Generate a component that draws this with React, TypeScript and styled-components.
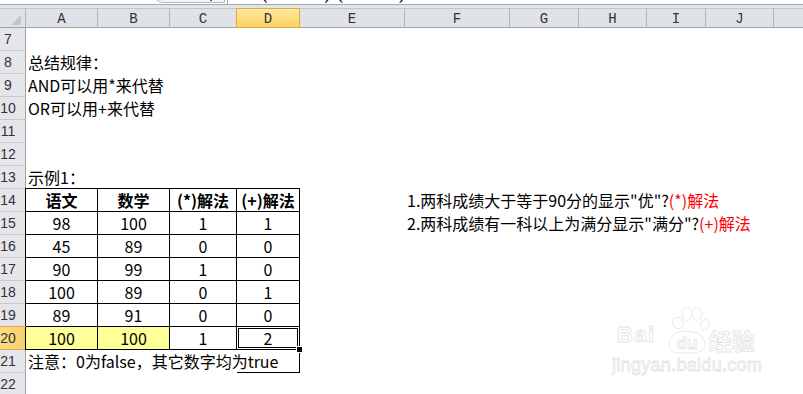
import React from 'react'
import styled, { createGlobalStyle } from 'styled-components'

const GlobalStyle = createGlobalStyle`
  html, body {
    margin: 0;
    padding: 0;
    background: #fff;
  }
  body {
    width: 803px;
    height: 394px;
    overflow: hidden;
  }
`

const COLS = ['A', 'B', 'C', 'D', 'E', 'F', 'G', 'H', 'I', 'J', 'K']
const WIDTHS = [26, 72, 72, 67, 63, 105, 105, 69, 68, 59, 68, 100]
const ROW_FROM = 7
const ROW_TO = 22
const ACTIVE_COL = 'D'
const ACTIVE_ROW = 20
// last column runs past the window edge, its letter is not in view
const VISIBLE_COLS = 10

const Page = styled.div`
  position: relative;
  width: 803px;
  height: 394px;
  overflow: hidden;
  background: #fff;
  font-family: 'Noto Sans CJK SC', 'Microsoft YaHei', sans-serif;
  color: #000;
`

// formula bar, scrolled off so only its lower edge shows
const FormulaBar = styled.div`
  display: flex;
  height: 4px;
  overflow: hidden;
  background: #fff;
  border-bottom: 1px solid #a5a9ae;
`

const NameBox = styled.div`
  flex: none;
  width: 153px;
  margin-top: -12px;
  text-align: center;
  font: 700 14px/16px 'Liberation Serif', serif;
  color: #222;
`

const Grip = styled.div`
  flex: none;
  width: 72px;
  height: 12px;
  margin-top: -9px;
  box-sizing: border-box;
  border: 1px solid #b5b9be;
  border-radius: 0 0 0 10px;
  background: #f4f5f7;
  position: relative;
  &::after {
    content: '';
    position: absolute;
    right: 12px;
    bottom: 1px;
    width: 2px;
    height: 2px;
    background: #555;
  }
`

const FormulaText = styled.div`
  flex: 1;
  margin-left: 2px;
  padding-left: 26px;
  border-left: 1px solid #a0a4a8;
  margin-top: -13px;
  font: 700 15px/16px 'Liberation Serif', serif;
  white-space: nowrap;
  color: #222;
`

const Band = styled.div`
  height: 3px;
  background: #e1e4e9;
`

const Sheet = styled.div`
  display: grid;
  grid-template-columns: ${WIDTHS.map((w) => `${w}px`).join(' ')};
  grid-template-rows: 20px repeat(${ROW_TO - ROW_FROM + 1}, 23px);
`

const Corner = styled.div`
  box-sizing: border-box;
  display: flex;
  align-items: flex-end;
  justify-content: flex-end;
  padding: 0 4px 2px 0;
  background: #dfe2e7;
  border-top: 1px solid #c2c6cb;
  border-bottom: 1px solid #9fa3a8;
  border-right: 1px solid #b1b5ba;
`

const ColHead = styled.div<{ $active?: boolean }>`
  box-sizing: border-box;
  min-width: 0;
  display: flex;
  align-items: center;
  justify-content: center;
  padding-top: 2px;
  font: 14px 'Liberation Mono', monospace;
  color: #333;
  background: ${({ $active }) => ($active ? 'linear-gradient(#fee8a3, #fcd35f)' : '#dfe2e7')};
  border-top: 1px solid ${({ $active }) => ($active ? '#e2a93f' : '#c2c6cb')};
  border-bottom: 1px solid ${({ $active }) => ($active ? '#e2a93f' : '#9fa3a8')};
  border-right: 1px solid ${({ $active }) => ($active ? '#e2a93f' : '#b1b5ba')};
  box-shadow: ${({ $active }) => ($active ? '-1px 0 0 #e2a93f' : 'none')};
`

const RowHead = styled.div<{ $active?: boolean }>`
  box-sizing: border-box;
  display: flex;
  align-items: center;
  justify-content: center;
  padding-right: 9px;
  font: 14px 'Liberation Sans', sans-serif;
  color: #333;
  background: ${({ $active }) => ($active ? 'linear-gradient(90deg, #fbdc86, #f8d06a)' : '#e4e6ea')};
  border-right: 1px solid ${({ $active }) => ($active ? '#e2a93f' : '#9ea2a7')};
  border-bottom: 1px solid ${({ $active }) => ($active ? '#e2a93f' : '#c6cace')};
  box-shadow: ${({ $active }) => ($active ? '0 -1px 0 #e2a93f' : 'none')};
`

type Edges = { r?: boolean; b?: boolean; t?: boolean; l?: boolean }

const shadows = ({ t, l }: Edges) => {
  const list: string[] = []
  if (t) list.push('0 -1px 0 #000')
  if (l) list.push('-1px 0 0 #000')
  if (t && l) list.push('-1px -1px 0 #000')
  return list.length ? list.join(', ') : 'none'
}

const Cell = styled.div<{
  $center?: boolean
  $bold?: boolean
  $fill?: string
  $r?: boolean
  $b?: boolean
  $t?: boolean
  $l?: boolean
  $selected?: boolean
}>`
  box-sizing: border-box;
  min-width: 0;
  display: flex;
  align-items: center;
  justify-content: ${({ $center }) => ($center ? 'center' : 'flex-start')};
  padding: 0 2px;
  white-space: nowrap;
  font-size: 16px;
  font-weight: ${({ $bold }) => ($bold ? 700 : 400)};
  background: ${({ $fill }) => $fill ?? 'transparent'};
  border-right: 1px solid ${({ $r }) => ($r ? '#000' : 'transparent')};
  border-bottom: 1px solid ${({ $b }) => ($b ? '#000' : 'transparent')};
  box-shadow: ${({ $t, $l }) => shadows({ t: $t, l: $l })};
  position: ${({ $selected }) => ($selected ? 'relative' : 'static')};
`

const Selection = styled.div`
  position: absolute;
  inset: -1px;
  z-index: 2;
  border: 1px solid #000;
  box-shadow: inset 0 0 0 1px #fff, inset 0 0 0 2px #000;
  pointer-events: none;
`

const FillHandle = styled.div`
  position: absolute;
  right: -4px;
  bottom: -4px;
  width: 5px;
  height: 5px;
  background: #000;
  border: 1px solid #fff;
`

const Red = styled.span`
  color: #ff0000;
`

const Watermark = styled.div`
  position: absolute;
  left: 612px;
  top: 305px;
  display: flex;
  flex-direction: column;
  pointer-events: none;
  color: #fff;
  -webkit-text-stroke: 0.8px #e3e3e3;
  font-family: 'Liberation Sans', Arial, sans-serif;
`

const BrandRow = styled.div`
  display: flex;
  align-items: flex-end;
  height: 50px;
`

const Bai = styled.span`
  font-size: 22px;
  font-weight: 700;
  letter-spacing: 1.5px;
  line-height: 1;
  margin: 0 9px 9px 5px;
`

const Paw = styled.svg`
  flex: none;
  display: block;
`

const Jingyan = styled.span`
  font-family: 'Noto Sans CJK SC', sans-serif;
  font-size: 23px;
  font-weight: 700;
  line-height: 1;
  margin: 0 0 3px -2px;
`

const Url = styled.span`
  font-size: 18px;
  line-height: 18px;
  letter-spacing: 0.3px;
  margin-top: 1px;
`

type CellSpec = {
  text?: React.ReactNode
  center?: boolean
  bold?: boolean
  fill?: string
  selected?: boolean
} & Edges

const table = [
  ['语文', '数学', '(*)解法', '(+)解法'],
  ['98', '100', '1', '1'],
  ['45', '89', '0', '0'],
  ['90', '99', '1', '0'],
  ['100', '89', '0', '1'],
  ['89', '91', '0', '0'],
  ['100', '100', '1', '2'],
]

const TABLE_TOP = 14

const buildRow = (row: number): CellSpec[] => {
  const cells: CellSpec[] = COLS.map(() => ({}))
  const t = row - TABLE_TOP
  if (t >= 0 && t < table.length) {
    table[t].forEach((text, i) => {
      cells[i] = {
        text,
        center: true,
        bold: t === 0,
        r: true,
        b: true,
        t: t === 0,
        l: i === 0,
        fill: row === 20 && i < 2 ? '#ffff99' : undefined,
        selected: row === ACTIVE_ROW && COLS[i] === ACTIVE_COL,
      }
    })
  }
  if (row === 8) cells[0] = { text: '总结规律：' }
  if (row === 9) cells[0] = { text: 'AND可以用*来代替' }
  if (row === 10) cells[0] = { text: 'OR可以用+来代替' }
  if (row === 13) cells[0] = { text: '示例1：' }
  if (row === 14)
    cells[5] = {
      text: (
        <>
          1.两科成绩大于等于90分的显示"优"?<Red>(*)解法</Red>
        </>
      ),
    }
  if (row === 15)
    cells[5] = {
      text: (
        <>
          2.两科成绩有一科以上为满分显示"满分"?<Red>(+)解法</Red>
        </>
      ),
    }
  if (row === 21) {
    cells[0] = { text: '注意：0为false，其它数字均为true' }
    cells[3] = { r: true, b: true }
  }
  return cells
}

const rows = Array.from({ length: ROW_TO - ROW_FROM + 1 }, (_, i) => ROW_FROM + i)

export default function App() {
  return (
    <>
      <GlobalStyle />
      <Page>
        <FormulaBar>
          <NameBox>D20</NameBox>
          <Grip />
          <FormulaText>=(A20=100)+(B20=100)</FormulaText>
        </FormulaBar>
        <Band />
        <Sheet>
          <Corner>
            <svg width="10" height="10" viewBox="0 0 10 10">
              <polygon points="10,0 10,10 0,10" fill="#c3c7cc" />
            </svg>
          </Corner>
          {COLS.map((c, i) => (
            <ColHead key={c} $active={c === ACTIVE_COL}>
              {i < VISIBLE_COLS ? c : null}
            </ColHead>
          ))}
          {rows.map((row) => (
            <React.Fragment key={row}>
              <RowHead $active={row === ACTIVE_ROW}>{row}</RowHead>
              {buildRow(row).map((cell, i) => (
                <Cell
                  key={COLS[i]}
                  $center={cell.center}
                  $bold={cell.bold}
                  $fill={cell.fill}
                  $r={cell.r}
                  $b={cell.b}
                  $t={cell.t}
                  $l={cell.l}
                  $selected={cell.selected}
                >
                  {cell.text}
                  {cell.selected && (
                    <Selection>
                      <FillHandle />
                    </Selection>
                  )}
                </Cell>
              ))}
            </React.Fragment>
          ))}
        </Sheet>
        <Watermark>
          <BrandRow>
            <Bai>Bai</Bai>
            <Paw width="46" height="50" viewBox="0 0 46 50">
              <g fill="#fff" stroke="#e3e3e3" strokeWidth="0.8">
                <ellipse cx="13" cy="18" rx="5" ry="6" transform="rotate(-20 13 18)" />
                <ellipse cx="22" cy="9" rx="5" ry="6.5" />
                <ellipse cx="32" cy="9" rx="5" ry="6.5" />
                <ellipse cx="40" cy="20" rx="4" ry="5.5" transform="rotate(20 40 20)" />
                <path d="M4 40 C4 30 12 26 21 26 C30 26 40 30 40 40 C40 47 33 48 21 48 C10 48 4 47 4 40 Z" />
                <text
                  x="22"
                  y="44"
                  textAnchor="middle"
                  fontFamily="'Liberation Sans', Arial, sans-serif"
                  fontSize="17"
                  fontWeight="700"
                >
                  du
                </text>
              </g>
            </Paw>
            <Jingyan>经验</Jingyan>
          </BrandRow>
          <Url>jingyan.baidu.com</Url>
        </Watermark>
      </Page>
    </>
  )
}
